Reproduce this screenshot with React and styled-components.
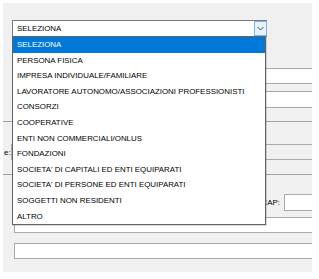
import React from 'react';
import styled, { createGlobalStyle } from 'styled-components';

const GlobalStyle = createGlobalStyle`
  body {
    margin: 0;
    background: #ffffff;
    font-family: "Liberation Sans", Arial, sans-serif;
  }
`;

const Frame = styled.div`
  width: 319px;
  height: 279px;
  padding: 3px 7px 7px 3px;
  box-sizing: border-box;
  background: #ffffff;
`;

const Panel = styled.div`
  position: relative;
  height: 100%;
  background: #f0f0f0;
  overflow: hidden;
  display: flex;
  flex-direction: column;
  padding-top: 17px;
  box-sizing: border-box;
`;

const Row = styled.div`
  display: flex;
  align-items: center;
  margin-top: ${(p) => p.mt || 0}px;
  height: ${(p) => p.h || 17}px;
  padding-left: ${(p) => p.left || 11}px;
`;

const Select = styled.div`
  width: 255px;
  height: 17px;
  margin-left: -2px;
  box-sizing: border-box;
  border: 1px solid #7a7a7a;
  background: #ffffff;
  display: flex;
  align-items: center;
  font-size: 7.9px;
  color: #000;
  padding-left: 4px;
`;

const SelectText = styled.span`
  flex: 1;
`;

const Arrow = styled.div`
  width: 13px;
  height: 15px;
  margin-right: -1px;
  box-sizing: border-box;
  border: 1px solid #7eb4ea;
  background: #e5f1fb;
  display: flex;
  align-items: center;
  justify-content: center;
`;

const Input = styled.div`
  flex: 1;
  min-width: 320px;
  height: 100%;
  box-sizing: border-box;
  border: 1px solid #a9a9a9;
  background: ${(p) => (p.gray ? '#f0f0f0' : '#ffffff')};
`;

const Separator = styled.div`
  height: 1px;
  background: #a0a0a0;
  margin-top: ${(p) => p.mt || 0}px;
`;

const Label = styled.span`
  font-size: 7.9px;
  color: #000;
  margin-right: 4px;
  white-space: nowrap;
`;

const LeftLabel = styled.span`
  font-size: 7.9px;
  color: #000;
  margin-left: -2px;
  width: 8px;
  display: flex;
  align-items: center;
  white-space: nowrap;
`;

const Dash = styled.span`
  width: 3px;
  height: 1px;
  background: #a0a0a0;
`;

const CapGroup = styled.div`
  display: flex;
  align-items: center;
  margin-left: auto;
  height: 100%;
`;

const CapInput = styled.div`
  width: 28px;
  height: 100%;
  box-sizing: border-box;
  border: 1px solid #a9a9a9;
  border-right: none;
  background: #ffffff;
`;

const Dropdown = styled.ul`
  position: absolute;
  left: 9px;
  top: 33px;
  width: 254px;
  margin: 0;
  padding: 0;
  list-style: none;
  box-sizing: border-box;
  border: 1px solid #646464;
  background: #ffffff;
  box-shadow: 1px 1px 0 rgba(0, 0, 0, 0.15);
`;

const Item = styled.li`
  height: 15.6px;
  line-height: 15.6px;
  font-size: 7.9px;
  padding-left: 4px;
  white-space: nowrap;
  color: ${(p) => (p.selected ? '#ffffff' : '#000000')};
  background: ${(p) => (p.selected ? '#0078d7' : 'transparent')};
`;

const items = [
  'SELEZIONA',
  'PERSONA FISICA',
  'IMPRESA INDIVIDUALE/FAMILIARE',
  'LAVORATORE AUTONOMO/ASSOCIAZIONI PROFESSIONISTI',
  'CONSORZI',
  'COOPERATIVE',
  'ENTI NON COMMERCIALI/ONLUS',
  'FONDAZIONI',
  "SOCIETA' DI CAPITALI ED ENTI EQUIPARATI",
  "SOCIETA' DI PERSONE ED ENTI EQUIPARATI",
  'SOGGETTI NON RESIDENTI',
  'ALTRO',
];

const Chevron = () => (
  <svg width="7" height="5" viewBox="0 0 7 5">
    <path d="M0.5 1 L3.5 4 L6.5 1" fill="none" stroke="#4a4a4a" strokeWidth="1" />
  </svg>
);

export default function App() {
  return (
    <>
      <GlobalStyle />
      <Frame>
        <Panel>
          <Row left={11}>
            <Select>
              <SelectText>SELEZIONA</SelectText>
              <Arrow>
                <Chevron />
              </Arrow>
            </Select>
          </Row>
          <Row mt={31} h={16}>
            <Input />
          </Row>
          <Row mt={7} h={17}>
            <Input />
          </Row>
          <Separator mt={13} />
          <Row mt={22} h={16} left={3}>
            <LeftLabel>e:</LeftLabel>
            <Dash />
            <Input gray />
          </Row>
          <Separator mt={14} />
          <Row mt={19} h={17}>
            <CapGroup>
              <Label>CAP:</Label>
              <CapInput />
            </CapGroup>
          </Row>
          <Row mt={6} h={16}>
            <Input />
          </Row>
          <Row mt={10} h={16}>
            <Input />
          </Row>
          <Dropdown>
            {items.map((it, i) => (
              <Item key={it} selected={i === 0}>
                {it}
              </Item>
            ))}
          </Dropdown>
        </Panel>
      </Frame>
    </>
  );
}
